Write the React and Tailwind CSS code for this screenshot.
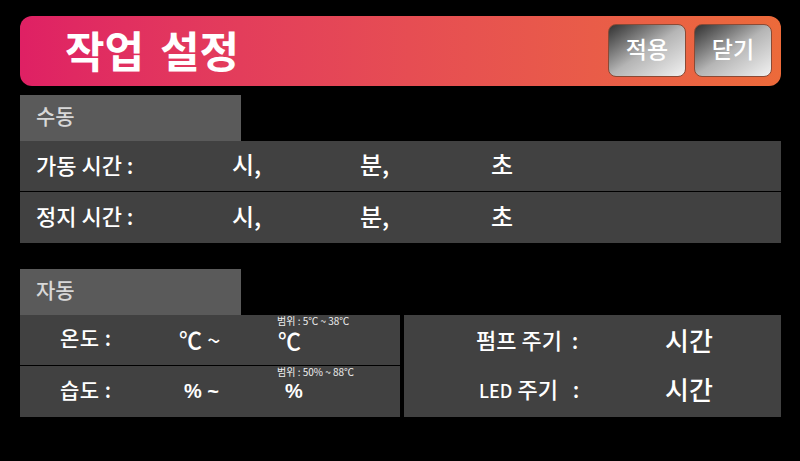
import React from 'react';

const FONT = "font-['Noto_Sans_CJK_KR','Noto_Sans',sans-serif]";

const ActionButton = ({ label }) => (
  <button className="w-[78px] h-[53px] rounded-lg border border-[#8a4a35] bg-gradient-to-br from-[#333333] via-[#b5b5b5] to-[#f2f2f2] text-white text-[23px] font-medium leading-none pb-1">
    {label}
  </button>
);

const SectionTab = ({ label }) => (
  <div className="w-[221px] h-[46px] bg-[#5a5a5a] pl-4 pb-1 flex items-center text-[#d8d8d8] text-[21px] font-medium">
    {label}
  </div>
);

const TimeRow = ({ label, height }) => (
  <div className={`${height} bg-[#414141] pl-4 grid grid-cols-[196px_128px_131px_1fr] items-center text-white font-medium`}>
    <span className="text-[22px] pb-1 whitespace-nowrap">{label}</span>
    <span className="text-[24px] pb-1">시,</span>
    <span className="text-[24px] pb-1">분,</span>
    <span className="text-[24px] pb-1">초</span>
  </div>
);

const RangeRow = ({ label, from, to, range, height, fromClass, toClass }) => (
  <div className={`${height} bg-[#414141] pl-10 grid grid-cols-[119px_98px_1fr] text-white font-medium`}>
    <span className="text-[21px] self-center pb-1 tracking-[0.5px]">{label}</span>
    <span className={`self-center whitespace-nowrap pb-[1px] ${fromClass}`}>{from}</span>
    <div className="flex flex-col">
      <span className="text-[10px] leading-[12px] text-[#eeeeee] whitespace-nowrap font-normal">{range}</span>
      <span className={`mt-[1px] leading-[24px] ${toClass}`}>{to}</span>
    </div>
  </div>
);

const CycleRow = ({ label, labelClass }) => (
  <div className="flex-1 grid grid-cols-[189px_1fr] items-center text-white font-medium">
    <span className={`text-[22px] whitespace-pre ${labelClass}`}>{label}</span>
    <span className="text-[26px] pb-[1px]">시간</span>
  </div>
);

export default function App() {
  return (
    <div className={`w-[800px] h-[461px] bg-black pt-4 pl-5 pr-[19px] overflow-hidden ${FONT}`}>
      <header className="h-[70px] rounded-[12px] bg-gradient-to-r from-[#df2064] to-[#ec6a3a] flex items-center justify-between pl-[45px] pr-[9px]">
        <h1 className="text-white text-[43px] font-semibold leading-none pb-1 [word-spacing:6px]">작업 설정</h1>
        <div className="flex gap-2 pb-[1px]">
          <ActionButton label="적용" />
          <ActionButton label="닫기" />
        </div>
      </header>

      <section className="mt-[9px]">
        <SectionTab label="수동" />
        <TimeRow label="가동 시간 :" height="h-[50px]" />
        <div className="h-[1px]" />
        <TimeRow label="정지 시간 :" height="h-[51px]" />
      </section>

      <section className="mt-[26px]">
        <SectionTab label="자동" />
        <div className="flex gap-1">
          <div className="w-[380px]">
            <RangeRow label="온도 :" from="℃ ~" to="℃" range="범위 : 5℃ ~ 38℃" height="h-[50px]" fromClass="text-[23px]" toClass="text-[23px] pl-[1px]" />
            <div className="h-[1px]" />
            <RangeRow label="습도 :" from="% ~" to="%" range="범위 : 50% ~ 88℃" height="h-[51px]" fromClass="text-[20px] pl-[5px] font-bold font-['Liberation_Sans']" toClass="text-[20px] pl-[8px] font-bold font-['Liberation_Sans']" />
          </div>
          <div className="flex-1 h-[102px] bg-[#414141] flex flex-col pl-[72px] pb-1">
            <CycleRow label="펌프 주기  :" />
            <CycleRow label={<><span className="text-[18px]">LED</span> 주기   :</>} labelClass="pl-[3px]" />
          </div>
        </div>
      </section>
    </div>
  );
}
